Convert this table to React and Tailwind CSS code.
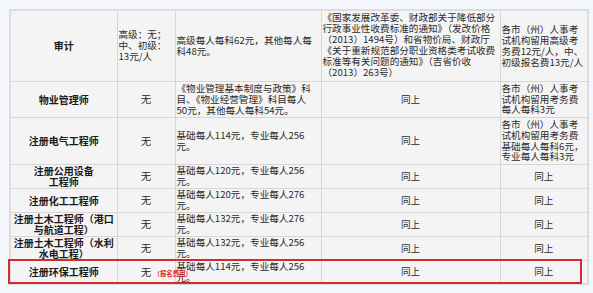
import React from "react";

const rows = [
  {
    name: ["物业管理师"],
    fee: "无",
    exam: ["《物业管理基本制度与政策》科", "目、《物业经营管理》科目每人", "50元，其他每人每科54元。"],
    basis: "同上",
    local: ["各市（州）人事考", "试机构留用考务费", "每人每科3元"],
    h: "h-[36px]",
  },
  {
    name: ["注册电气工程师"],
    fee: "无",
    exam: ["基础每人114元，专业每人256", "元。"],
    basis: "同上",
    local: ["各市（州）人事考", "试机构留用考务费", "基础每人每科6元，", "专业每人每科3元"],
    h: "h-[47px]",
  },
  {
    name: ["注册公用设备", "工程师"],
    fee: "无",
    exam: ["基础每人120元，专业每人256", "元。"],
    basis: "同上",
    local: ["同上"],
    h: "h-[24px]",
  },
  {
    name: ["注册化工工程师"],
    fee: "无",
    exam: ["基础每人120元，专业每人276", "元。"],
    basis: "同上",
    local: ["同上"],
    h: "h-[24px]",
  },
  {
    name: ["注册土木工程师（港口", "与航道工程）"],
    fee: "无",
    exam: ["基础每人132元，专业每人276", "元。"],
    basis: "同上",
    local: ["同上"],
    h: "h-[24px]",
  },
  {
    name: ["注册土木工程师（水利", "水电工程）"],
    fee: "无",
    exam: ["基础每人132元，专业每人256", "元。"],
    basis: "同上",
    local: ["同上"],
    h: "h-[24px]",
  },
  {
    name: ["注册环保工程师"],
    fee: "无",
    note: true,
    exam: ["基础每人114元，专业每人256", "元。"],
    basis: "同上",
    local: ["同上"],
    h: "h-[24px]",
  },
];

const Lines = ({ lines }) =>
  lines.map((l, i) => (
    <div key={i} className="whitespace-nowrap">
      {l}
    </div>
  ));

const cell = "border border-[#d6d6d6] bg-[#f4f4f4] px-[1px] p-0";

export default function App() {
  return (
    <div
      className="w-[593px] h-[293px] bg-[#f3f6fb] pt-[9px] pl-[9px] text-[#2b2b2b] text-[9.6px] leading-[11px] overflow-hidden"
      style={{ fontFamily: '"Noto Sans CJK SC", "Noto Sans", sans-serif' }}
    >
      <div className="relative w-[578px]">
        <table className="w-[578px] table-fixed border-collapse border-2 border-[#dcdcdc]">
          <colgroup>
            <col className="w-[107px]" />
            <col className="w-[58px]" />
            <col className="w-[146px]" />
            <col className="w-[179px]" />
            <col className="w-[88px]" />
          </colgroup>
          <tbody>
            <tr className="h-[71px]">
              <td className={`${cell} text-center font-bold text-[10px] text-[#1a1a1a]`}>审计</td>
              <td className={cell}>
                <Lines lines={["高级：无；", "中、初级：", "13元/人"]} />
              </td>
              <td className={cell}>
                <Lines lines={["高级每人每科62元，其他每人每", "科48元。"]} />
              </td>
              <td className={`${cell} align-top pt-[1px]`}>
                <Lines
                  lines={[
                    "《国家发展改革委、财政部关于降低部分",
                    "行政事业性收费标准的通知》（发改价格",
                    "（2013）1494号）和省物价局、财政厅",
                    "《关于重新规范部分职业资格类考试收费",
                    "标准等有关问题的通知》（吉省价收",
                    "（2013）263号）",
                  ]}
                />
              </td>
              <td className={cell}>
                <Lines lines={["各市（州）人事考", "试机构留用高级考", "务费12元/人，中、", "初级报名费13元/人"]} />
              </td>
            </tr>
            {rows.map((r, i) => (
              <tr key={i} className={r.h}>
                <td className={`${cell} text-center font-bold text-[10px] leading-[11px] text-[#1a1a1a]`}>
                  <Lines lines={r.name} />
                </td>
                <td className={`${cell} text-center`}>
                  <div className="relative">
                    <span className="text-[10.5px]">{r.fee}</span>
                    {r.note && (
                      <span className="absolute left-[35px] top-[2px] whitespace-nowrap text-[6.4px] font-bold text-[#e0262b]">
                        （报名费用）
                      </span>
                    )}
                  </div>
                </td>
                <td className={cell}>
                  <Lines lines={r.exam} />
                </td>
                <td className={`${cell} text-center`}>{r.basis}</td>
                <td className={`${cell} ${r.local.length === 1 ? "text-center" : ""} leading-[10.7px]`}>
                  <Lines lines={r.local} />
                </td>
              </tr>
            ))}
          </tbody>
        </table>
        <div className="absolute left-[-1px] top-[250px] w-[574px] h-[25px] border-2 border-[#d42a2f] pointer-events-none" />
      </div>
    </div>
  );
}
